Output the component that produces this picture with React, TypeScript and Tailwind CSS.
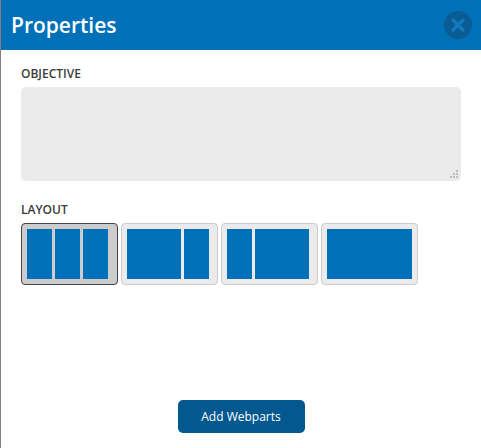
import React from "react";

const Tile = ({ cols, active }: { cols: number[]; active?: boolean }) => (
  <button
    className={`flex h-[62px] w-[97px] gap-[3px] rounded-[4px] border pl-[5px] pt-[5px] ${
      active ? "border-[#444444] bg-[#cccccc]" : "border-[#cccccc] bg-[#ebebeb]"
    }`}
  >
    {cols.map((w, i) => (
      <span key={i} className="block h-[50px] bg-[#0071b9]" style={{ width: w }} />
    ))}
  </button>
);

const App = () => {
  return (
    <div className="flex h-[448px] w-[481px] flex-col overflow-hidden border-l border-[#808080] bg-white font-['Open_Sans',sans-serif]">
      <div className="flex h-[50px] shrink-0 items-center justify-between bg-[#0071b9] pl-[10px] pr-[9px]">
        <h1 className="text-[21px] font-semibold leading-none text-white">Properties</h1>
        <button className="flex h-[28px] w-[28px] items-center justify-center rounded-full bg-[#0a5c94]">
          <svg width="16" height="16" viewBox="0 0 16 16">
            <path d="M3 3 13 13M13 3 3 13" stroke="#1378bc" strokeWidth="3.4" strokeLinecap="round" />
          </svg>
        </button>
      </div>

      <div className="flex flex-1 flex-col pl-[20px] pr-[20px]">
        <label className="mt-[17px] text-[12px] font-semibold leading-[14px] text-[#3b3b3b]">OBJECTIVE</label>
        <div className="relative mt-[6px] h-[94px] w-[440px]">
          <textarea className="block h-full w-full resize-none rounded-[5px] bg-[#ebebeb] outline-none" />
          <svg className="absolute bottom-[2px] right-[2px]" width="9" height="9" viewBox="0 0 9 9" fill="#bdbdbd">
            <rect x="6" y="0" width="2" height="2" />
            <rect x="3" y="3" width="2" height="2" />
            <rect x="6" y="3" width="2" height="2" />
            <rect x="0" y="6" width="2" height="2" />
            <rect x="3" y="6" width="2" height="2" />
            <rect x="6" y="6" width="2" height="2" />
          </svg>
        </div>

        <label className="mt-[22px] text-[12px] font-semibold leading-[14px] text-[#3b3b3b]">LAYOUT</label>
        <div className="mt-[6px] flex gap-[3px]">
          <Tile active cols={[25, 25, 25]} />
          <Tile cols={[54, 25]} />
          <Tile cols={[25, 54]} />
          <Tile cols={[85]} />
        </div>

        <div className="mt-[115px] flex justify-center">
          <button className="h-[33px] w-[127px] rounded-[5px] bg-[#03588f] text-[12px] text-white">
            Add Webparts
          </button>
        </div>
      </div>
    </div>
  );
};

export default App;
